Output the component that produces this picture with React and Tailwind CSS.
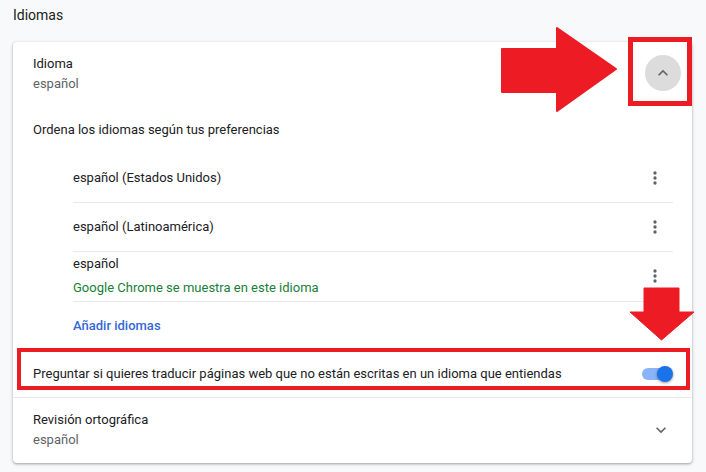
const font = { fontFamily: "Roboto, 'Noto Sans', sans-serif" };

function MoreVert() {
  return (
    <svg width="20" height="20" viewBox="0 0 24 24" fill="#5f6368">
      <circle cx="12" cy="6" r="2" />
      <circle cx="12" cy="12" r="2" />
      <circle cx="12" cy="18" r="2" />
    </svg>
  );
}

function LangItem({ name, note }) {
  return (
    <div
      className={
        "flex items-center justify-between border-b border-[#e8eaed] " +
        (note ? "min-h-[49px] pt-[2px] pb-[3px]" : "h-[49px]")
      }
    >
      <div className="flex flex-col gap-[4px]">
        <span className="text-[#202124]">{name}</span>
        {note && <span className="text-[#188038]">{note}</span>}
      </div>
      <button className="flex h-9 w-9 items-center justify-center">
        <MoreVert />
      </button>
    </div>
  );
}

export default function App() {
  return (
    <div
      className="relative min-h-screen bg-[#f8f9fa] pl-[13px] pr-[14px] pt-[5px] text-[13px] leading-5"
      style={font}
    >
      <h2 className="text-[14px] leading-5 text-[#202124]">Idiomas</h2>

      <div className="mt-[17px] rounded-[4px] bg-white shadow-[0_1px_2px_0_rgba(60,64,67,0.3),0_1px_3px_1px_rgba(60,64,67,0.15)]">
        {/* Idioma */}
        <div className="flex h-[62px] items-center justify-between pl-5 pr-[11px]">
          <div className="mt-[2px] flex flex-col">
            <span className="text-[#202124]">Idioma</span>
            <span className="text-[#5f6368]">español</span>
          </div>
          <div className="flex h-9 w-9 items-center justify-center rounded-full bg-[#dcdcdc]">
            <svg width="20" height="20" viewBox="0 0 24 24" fill="#5f6368">
              <path d="M12 8l-6 6 1.41 1.41L12 10.83l4.59 4.58L18 14z" />
            </svg>
          </div>
        </div>

        <div className="mt-4 pl-5 text-[#202124]">Ordena los idiomas según tus preferencias</div>

        <div className="ml-[60px] mr-[19px] mt-[14px]">
          <LangItem name="español (Estados Unidos)" />
          <LangItem name="español (Latinoamérica)" />
          <LangItem name="español" note="Google Chrome se muestra en este idioma" />
        </div>

        <div className="ml-[60px] mt-[14px] font-medium text-[#3367d6]">Añadir idiomas</div>

        {/* Traducir */}
        <div className="relative mt-[14px] flex h-[48px] items-center justify-between border-b border-[#e8eaed] pl-5 pr-[19px]">
          <span className="text-[#202124]">
            Preguntar si quieres traducir páginas web que no están escritas en un idioma que entiendas
          </span>
          <div className="relative h-4 w-[31px]">
            <div className="absolute left-0 top-[2px] h-3 w-[28px] rounded-full bg-[#8ab4f8]" />
            <div className="absolute right-0 top-0 h-4 w-4 rounded-full bg-[#1a73e8] shadow-[0_1px_3px_rgba(0,0,0,0.4)]" />
          </div>
          <div className="pointer-events-none absolute bottom-[7px] left-[4px] right-[2px] top-[-2px] border-4 border-[#ed1c24]" />
        </div>

        {/* Revision */}
        <div className="flex items-center justify-between pb-[13px] pl-5 pr-[21px] pt-[12px]">
          <div className="flex flex-col">
            <span className="text-[#202124]">Revisión ortográfica</span>
            <span className="text-[#5f6368]">español</span>
          </div>
          <svg width="20" height="20" viewBox="0 0 24 24" fill="#5f6368">
            <path d="M16.59 8.59L12 13.17 7.41 8.59 6 10l6 6 6-6z" />
          </svg>
        </div>
      </div>

      {/* anotaciones */}
      <div className="pointer-events-none absolute left-[628px] top-[37px] h-[69px] w-[64px] border-[5px] border-[#ed1c24]" />
      <svg className="pointer-events-none absolute left-[501px] top-[27px]" width="116" height="85" viewBox="0 0 116 85">
        <path d="M1 22 H56 V1 L115 42 L56 84 V65 H1 Z" fill="#ed1c24" stroke="#ed1c24" strokeLinejoin="round" strokeWidth="2" />
      </svg>
      <svg className="pointer-events-none absolute left-[629px] top-[287px]" width="66" height="54" viewBox="0 0 66 54">
        <path d="M15 1 H50 V25 H65 L32.5 53 L1 25 H15 Z" fill="#ed1c24" stroke="#ed1c24" strokeLinejoin="round" strokeWidth="1" />
      </svg>
    </div>
  );
}
